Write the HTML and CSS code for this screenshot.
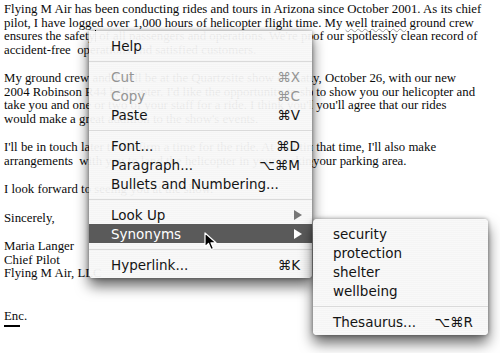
FILE: index.html
```html
<!DOCTYPE html>
<html>
  <head>
    <title>Synonyms</title>
    <link rel="stylesheet" href="styles.css">
  </head>
  <body>
    <div class="letter">
      <div class="para">
        <div class="line">Flying M Air has been conducting rides and tours in Arizona since October 2001. As its chief</div>
        <div class="line">pilot, I have logged over 1,000 hours of helicopter flight time. My <span class="wavy">well trained</span> ground crew</div>
        <div class="line cut"><span class="under">ensures the safety<span class="caret"></span> of all passengers and operations. We're proud of our record</span><span>of our spotlessly clean record of</span></div>
        <div class="line">accident-free &nbsp;operations and satisfied customers.</div>
      </div>

      <div class="para">
        <div class="line cut"><span class="under">My ground crew and I will be at the Quartzsite show on Saturday, October 26</span><span>y, October 26, with our new</span></div>
        <div class="line cut"><span class="under">2004 Robinson R44 helicopter. I'd like the opportunity to show you</span><span>&nbsp;to show you our helicopter and</span></div>
        <div class="line cut"><span class="under">take you and one or two of your staff for a ride. I think you'll agree</span><span>&nbsp;you'll agree that our rides</span></div>
        <div class="line">would make a great addition to the show's events.</div>
      </div>

      <div class="para">
        <div class="line cut"><span class="under">I'll be in touch later to confirm a time for the ride. At that time</span><span>&nbsp;that time, I'll also make</span></div>
        <div class="line cut"><span class="under">arrangements &nbsp;with you to land the helicopter in your parking area.</span><span>your parking area.</span></div>
      </div>

      <div class="para">
        <div class="line">I look forward to seeing you at the show.</div>
      </div>

      <div class="para">
        <div class="line">Sincerely,</div>
      </div>

      <div class="para">
        <div class="line">Maria Langer</div>
        <div class="line">Chief Pilot</div>
        <div class="line">Flying M Air, LLC</div>
      </div>

      <div class="para enc">
        <div class="line">Enc.</div>
      </div>
      <div class="doc-end"></div>
    </div>

    <div class="menu main-menu">
      <div class="item"><span>Help</span></div>
      <div class="sep"></div>
      <div class="item disabled"><span>Cut</span><span class="key">⌘X</span></div>
      <div class="item disabled"><span>Copy</span><span class="key">⌘C</span></div>
      <div class="item"><span>Paste</span><span class="key">⌘V</span></div>
      <div class="sep"></div>
      <div class="item"><span>Font...</span><span class="key">⌘D</span></div>
      <div class="item"><span>Paragraph...</span><span class="key">⌥⌘M</span></div>
      <div class="item"><span>Bullets and Numbering...</span></div>
      <div class="sep"></div>
      <div class="item"><span>Look Up</span><span class="arrow"></span></div>
      <div class="item active"><span>Synonyms</span><span class="arrow"></span></div>
      <div class="sep"></div>
      <div class="item"><span>Hyperlink...</span><span class="key">⌘K</span></div>
    </div>

    <div class="menu sub-menu">
      <div class="item"><span>security</span></div>
      <div class="item"><span>protection</span></div>
      <div class="item"><span>shelter</span></div>
      <div class="item"><span>wellbeing</span></div>
      <div class="sep"></div>
      <div class="item"><span>Thesaurus...</span><span class="key">⌥⌘R</span></div>
    </div>

    <svg class="pointer" width="14" height="20" viewBox="0 0 14 20">
      <path d="M1 1 L1 15 L4.5 11.5 L7 17.5 L9.5 16.5 L7 10.8 L12 10.8 Z" fill="#000" stroke="#fff" stroke-width="1.2" stroke-linejoin="round"/>
    </svg>
  </body>
</html>
```

FILE: styles.css
```css
body {
  margin: 0;
  background: #fff;
  width: 500px;
  height: 353px;
  overflow: hidden;
  position: relative;
}
.letter {
  font-family: "Liberation Serif", "Times New Roman", serif;
  font-size: 12.8px;
  line-height: 13.5px;
  color: #0a0a0a;
  padding: 3px 0 0 4px;
  white-space: nowrap;
}
.para {
  margin: 0 0 15px;
}
.line {
  height: 13.5px;
}
.line.cut {
  display: flex;
}
.line.cut .under {
  width: 309px;
  flex: none;
  overflow: hidden;
}
.wavy {
  text-decoration: underline wavy #999;
  text-decoration-thickness: 1px;
}
.caret {
  display: inline-block;
  width: 1px;
  height: 12px;
  background: #000;
  vertical-align: -2px;
}
.para.enc {
  margin: 29px 0 2px;
}
.doc-end {
  width: 16px;
  height: 2px;
  background: #000;
}

.menu {
  position: absolute;
  font-family: "DejaVu Sans", "Lucida Grande", sans-serif;
  font-size: 13.5px;
  color: #141414;
  background-color: rgba(244, 244, 244, 0.94);
  background-image: repeating-linear-gradient(to bottom, rgba(255, 255, 255, 0.35) 0, rgba(255, 255, 255, 0.35) 1px, transparent 1px, transparent 2px);
  box-shadow: 0 8px 14px rgba(0, 0, 0, 0.6), 0 0 4px rgba(0, 0, 0, 0.4);
  border-radius: 0 0 4px 4px;
}
.main-menu {
  left: 89px;
  top: 31px;
  width: 223px;
  padding: 5px 0 4px;
}
.sub-menu {
  left: 313px;
  top: 219px;
  width: 175px;
  padding: 5px 0 4px;
  border-radius: 4px;
}
.item {
  display: flex;
  justify-content: space-between;
  align-items: center;
  height: 19px;
  padding: 0 12px 0 22px;
}
.sub-menu .item {
  padding: 0 15px 0 20px;
}
.item.disabled {
  color: #949494;
}
.item.active {
  background: #5a5a5a;
  color: #fff;
}
.sep {
  height: 1px;
  margin: 6px 0 5px;
  background: #dadada;
}
.arrow {
  width: 0;
  height: 0;
  border-left: 8px solid #777;
  border-top: 5px solid transparent;
  border-bottom: 5px solid transparent;
  margin-right: -2px;
}
.item.active .arrow {
  border-left-color: #fff;
}
.pointer {
  position: absolute;
  left: 204px;
  top: 232px;
}
```
